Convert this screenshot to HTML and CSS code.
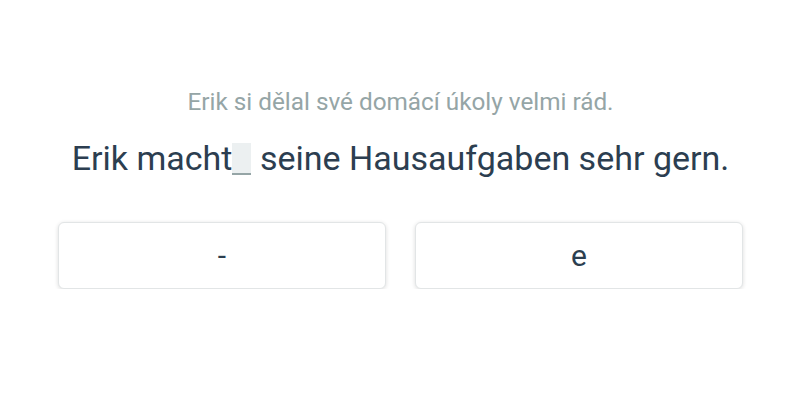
FILE: index.html
```html
<!DOCTYPE html>
<html lang="de">
<head>
    <meta charset="UTF-8">
    <meta name="viewport" content="width=device-width, initial-scale=1.0">
    <title>Cloze exercise</title>
    <link rel="stylesheet" href="styles.css">
</head>
<body>
    <div class="exercise">
        <p class="hint">Erik si dělal své domácí úkoly velmi rád.</p>
        <p class="sentence">Erik macht<span class="gap"></span> seine Hausaufgaben sehr gern.</p>
        <div class="options">
            <button class="option">-</button>
            <button class="option">e</button>
        </div>
    </div>
</body>
</html>
```

FILE: styles.css
```css
body {
    font-family: Roboto, "Liberation Sans", sans-serif;
    margin: 0;
    background-color: #ffffff;
    color: #2c3e50;
}

.exercise {
    display: flex;
    flex-direction: column;
    align-items: center;
    padding: 86px 57px 0 58px;
}

.hint {
    font-size: 24.3px;
    color: #95a5a6;
    margin: 0;
    line-height: 32px;
}

.sentence {
    font-size: 34px;
    margin: 20px 0 0;
    line-height: 40px;
}

.gap {
    display: inline-block;
    width: 19px;
    height: 32px;
    vertical-align: -5px;
    background-color: #ecf0f1;
    border-bottom: 2px solid #95a5a6;
    box-sizing: border-box;
}

.options {
    display: flex;
    gap: 29px;
    width: 100%;
    margin-top: 44px;
}

.option {
    flex: 1;
    height: 67px;
    font-family: inherit;
    font-size: 30px;
    color: #2c3e50;
    background-color: #ffffff;
    border: 1px solid #e2e5e6;
    border-radius: 6px;
    box-shadow: 0 1px 4px rgba(0, 0, 0, 0.14);
}
```
